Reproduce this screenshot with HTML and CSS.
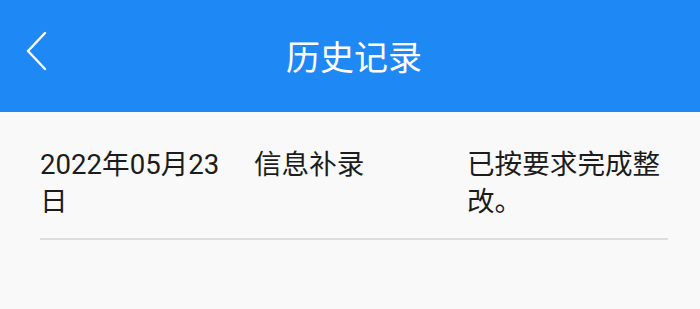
FILE: index.html
```html
<!DOCTYPE html>
<html lang="zh-CN">
<head>
<meta charset="utf-8">
<title>历史记录</title>
<link rel="stylesheet" href="styles.css">
</head>
<body>
<header class="topbar">
  <button class="back" aria-label="返回">
    <svg width="22" height="40" viewBox="0 0 22 40"><polyline points="19,2 2,20 19,38" fill="none" stroke="#fff" stroke-width="2.4" stroke-linecap="round" stroke-linejoin="round"/></svg>
  </button>
  <h1 class="title">历史记录</h1>
</header>
<main class="list">
  <div class="row">
    <div class="cell c1">2022年05月23日</div>
    <div class="cell c2">信息补录</div>
    <div class="cell c3">已按要求完成整改。</div>
  </div>
</main>
</body>
</html>
```
FILE: styles.css
```css
html, body {
  margin: 0;
  padding: 0;
  background: #f9f9f9;
  font-family: Roboto, "Noto Sans CJK SC", sans-serif;
}
.topbar {
  position: relative;
  height: 112px;
  background: #1e88f5;
  display: flex;
  align-items: center;
  justify-content: center;
}
.back {
  position: absolute;
  left: 26px;
  top: 31px;
  padding: 0;
  margin: 0;
  border: 0;
  background: none;
  display: block;
}
.back svg { display: block; }
.title {
  margin: 0;
  font-weight: normal;
  font-size: 34px;
  color: #fff;
  font-family: "Noto Sans CJK SC", sans-serif;
  letter-spacing: 0;
  line-height: 1;
  padding-left: 8px;
}
.list {
  padding: 0 32px 0 40px;
}
.row {
  display: grid;
  grid-template-columns: 214px 213px 1fr;
  padding: 34px 0 18px;
  border-bottom: 2px solid #dedede;
}
.cell {
  font-size: 27.6px;
  line-height: 37px;
  color: #1c1c1c;
}
.c1 { padding-right: 8px; }
.c2 { padding-right: 10px; }
```
